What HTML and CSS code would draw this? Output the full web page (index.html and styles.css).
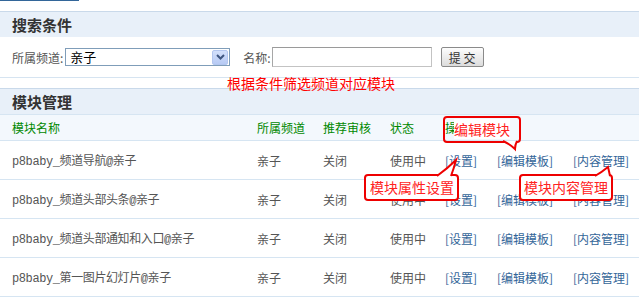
FILE: index.html
```html
<!DOCTYPE html>
<html lang="zh-CN">
<head>
    <meta charset="UTF-8">
    <title>模块管理</title>
    <link rel="stylesheet" href="styles.css">
</head>
<body>
    <div class="topline"></div>

    <div class="section first">
        <h2 class="bar">搜索条件</h2>
        <form class="search">
            <label class="lbl">所属频道:</label>
            <div class="select">
                <span class="select-val">亲子</span>
                <span class="select-btn">
                    <svg width="9" height="6" viewBox="0 0 9 6"><path d="M1 1 L4.5 4.5 L8 1" fill="none" stroke="#3f5680" stroke-width="2"/></svg>
                </span>
            </div>
            <label class="lbl name-lbl">名称:</label>
            <input type="text" class="txt">
            <button type="button" class="btn">提 交</button>
        </form>
    </div>

    <div class="section second">
        <h2 class="bar">模块管理</h2>
        <div class="row head">
            <span>模块名称</span>
            <span>所属频道</span>
            <span>推荐审核</span>
            <span>状态</span>
            <span>操作</span>
        </div>
        <div class="row">
            <span class="mod">p8baby_频道导航@亲子</span>
            <span>亲子</span>
            <span>关闭</span>
            <span>使用中</span>
            <span class="ops"><a>[设置]</a><a>[编辑模板]</a><a>[内容管理]</a></span>
        </div>
        <div class="row">
            <span class="mod">p8baby_频道头部头条@亲子</span>
            <span>亲子</span>
            <span>关闭</span>
            <span>使用中</span>
            <span class="ops"><a>[设置]</a><a>[编辑模板]</a><a>[内容管理]</a></span>
        </div>
        <div class="row">
            <span class="mod">p8baby_频道头部通知和入口@亲子</span>
            <span>亲子</span>
            <span>关闭</span>
            <span>使用中</span>
            <span class="ops"><a>[设置]</a><a>[编辑模板]</a><a>[内容管理]</a></span>
        </div>
        <div class="row last">
            <span class="mod">p8baby_第一图片幻灯片@亲子</span>
            <span>亲子</span>
            <span>关闭</span>
            <span>使用中</span>
            <span class="ops"><a>[设置]</a><a>[编辑模板]</a><a>[内容管理]</a></span>
        </div>
    </div>

    <!-- annotations drawn over the page -->
    <div class="note note-filter">根据条件筛选频道对应模块</div>
    <div class="callout c-edit"><span>编辑模块</span></div>
    <div class="callout c-prop">模块属性设置</div>
    <div class="callout c-content">模块内容管理</div>
    <svg class="tails" width="639" height="300" viewBox="0 0 639 300">
        <path d="M503 141 Q510 144 515 149 Q515 145 517 141" fill="#fff" stroke="#e00" stroke-width="2"/>
        <path d="M437 176 Q448 168 456 160 Q454 168 451 176" fill="#fff" stroke="#e00" stroke-width="2"/>
        <path d="M595 176 Q602 172 608 167 Q609 171 610 176" fill="#fff" stroke="#e00" stroke-width="2"/>
    </svg>
</body>
</html>
```

FILE: styles.css
```css
body {
    margin: 0;
    width: 639px;
    height: 300px;
    overflow: hidden;
    position: relative;
    background: #fff;
    font-family: "Noto Sans CJK SC", sans-serif;
    font-size: 12px;
    color: #555;
}

.topline {
    width: 79px;
    height: 1px;
    background: #336699;
}

.section.first {
    margin-top: 10px;
}

.section.second {
    margin-top: 10px;
}

.bar {
    margin: 0;
    height: 25px;
    line-height: 25px;
    padding-left: 12px;
    border-top: 1px solid #c9d9ea;
    background: #e8f0f9;
    font-size: 15px;
    font-weight: bold;
    color: #333;
}

.search {
    display: flex;
    align-items: center;
    height: 40px;
    margin: 0;
    padding-left: 12px;
    border-bottom: 1px solid #d6e4f1;
}

.lbl {
    font-size: 12px;
    color: #555;
    margin-right: 2px;
}

.select {
    display: flex;
    align-items: center;
    justify-content: space-between;
    width: 158px;
    height: 16px;
    border: 1px solid #7f9db9;
    padding: 0 1px 0 4px;
}

.select-val {
    font-size: 13px;
    color: #000;
    line-height: 16px;
}

.select-btn {
    display: flex;
    align-items: center;
    justify-content: center;
    width: 16px;
    height: 15px;
    border: 1px solid #b3c6ef;
    border-radius: 2px;
    box-sizing: border-box;
    background: linear-gradient(#d3e0fb, #b7caf4);
}

.name-lbl {
    margin-left: 13px;
    margin-right: 1px;
}

.txt {
    width: 160px;
    height: 20px;
    margin: 0;
    padding: 0;
    box-sizing: border-box;
    border: 1px solid #c3c3c3;
    border-top-color: #9a9a9a;
    border-left-color: #a7a7a7;
}

.btn {
    margin-left: 9px;
    width: 43px;
    height: 20px;
    padding: 0;
    border: 1px solid #8a8a8a;
    border-radius: 2px;
    background: linear-gradient(#fdfdfd, #dcdcdc);
    font-family: "Noto Sans CJK SC", sans-serif;
    font-size: 12px;
    color: #333;
}

.row {
    display: grid;
    grid-template-columns: 245px 66px 67px 55px 1fr;
    align-items: center;
    padding-left: 12px;
    height: 38px;
    border-top: 1px solid #d6e5f2;
    white-space: nowrap;
}

.row.head {
    height: 25px;
    background: #f3f8fd;
    color: #008800;
}

.row.last {
    border-bottom: 1px solid #d6e5f2;
}

.mod {
    font-family: "Liberation Mono", "Noto Sans CJK SC", monospace;
    font-size: 12px;
    letter-spacing: -0.4px;
}

.ops {
    display: flex;
}

.ops a {
    color: #336699;
    text-decoration: none;
}

.ops a:nth-child(1) {
    width: 52px;
}

.ops a:nth-child(2) {
    width: 76px;
}

.note {
    position: absolute;
    left: 227px;
    top: 74px;
    font-size: 14px;
    line-height: 18px;
    color: #f00;
}

.callout {
    position: absolute;
    box-sizing: border-box;
    height: 27px;
    border: 2px solid #e00;
    border-radius: 4px;
    background: #fff;
    font-size: 14px;
    line-height: 23px;
    color: #f22;
}

.c-edit {
    left: 443px;
    top: 116px;
    width: 78px;
    background: transparent;
    padding-left: 9px;
}

.c-edit span {
    background: #fff;
}

.c-prop {
    left: 364px;
    top: 174px;
    width: 95px;
    padding-left: 4px;
}

.c-content {
    left: 519px;
    top: 174px;
    width: 94px;
    padding-left: 3px;
}

.tails {
    position: absolute;
    left: 0;
    top: 0;
    pointer-events: none;
}
```
